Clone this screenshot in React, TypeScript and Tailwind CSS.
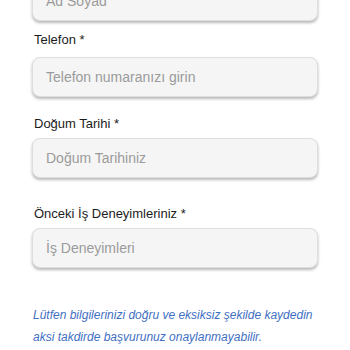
import React from "react";

// ── Form alanları ──────────────────────────────────────────────────────────────

const fields = [
  { label: null, placeholder: "Ad Soyad", labelClass: "" },
  { label: "Telefon *", placeholder: "Telefon numaranızı girin", labelClass: "mt-[10px] mb-[8px]" },
  { label: "Doğum Tarihi *", placeholder: "Doğum Tarihiniz", labelClass: "mt-[18px] mb-[5px]" },
  { label: "Önceki İş Deneyimleriniz *", placeholder: "İş Deneyimleri", labelClass: "mt-[27px] mb-[5px]" },
];

function Field({ label, placeholder, labelClass }: { label: string | null; placeholder: string; labelClass: string }) {
  return (
    <div className="flex flex-col">
      {label && (
        <label className={"text-[13px] leading-[18px] text-[#1c1c1c] pl-[2px] " + labelClass}>{label}</label>
      )}
      <input
        readOnly
        placeholder={placeholder}
        className="h-10 w-full rounded-lg border border-[#dedede] bg-[#f5f5f5] px-[13px] text-[14px] text-[#222] placeholder:text-[#9b9b9b] outline-none shadow-[0_2px_3px_rgba(0,0,0,0.28)]"
        style={{ fontFamily: '"Liberation Sans", Arial, sans-serif' }}
      />
    </div>
  );
}

export default function App() {
  return (
    <div
      className="w-[350px] h-[350px] overflow-hidden bg-white"
      style={{ fontFamily: '"Liberation Sans", Arial, sans-serif' }}
    >
      <div className="px-8 mt-[-19px] flex flex-col">
        {fields.map((f) => (
          <Field key={f.placeholder} {...f} />
        ))}
        <p className="mt-[36px] pl-[1px] text-[12px] leading-[22px] italic text-[#3f6fc3]">
          Lütfen bilgilerinizi doğru ve eksiksiz şekilde kaydedin aksi takdirde başvurunuz onaylanmayabilir.
        </p>
      </div>
    </div>
  );
}
